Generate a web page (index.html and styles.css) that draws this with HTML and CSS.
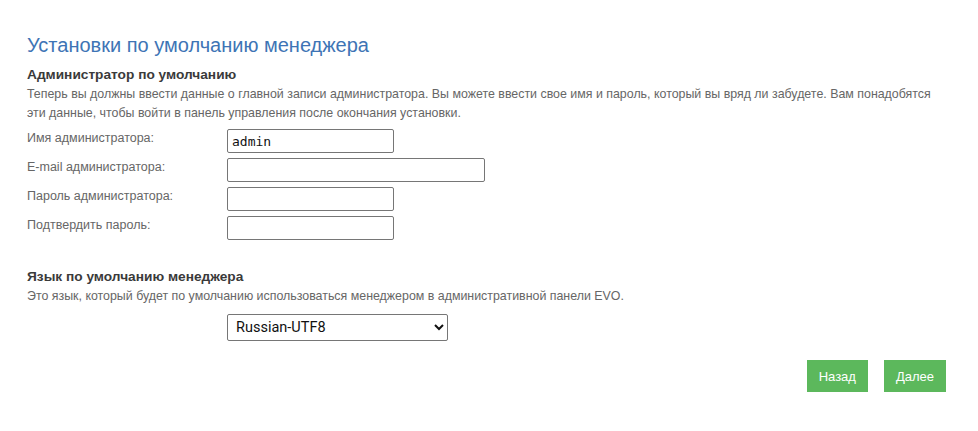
FILE: index.html
```html
<!DOCTYPE html>
<html>
<head>
  <meta charset="UTF-8">
  <link rel="stylesheet" href="styles.css">
</head>
<body>
  <div class="container">
    <h2>Установки по умолчанию менеджера</h2>

    <div class="section">
      <h3>Администратор по умолчанию</h3>
      <p class="helper-text">Теперь вы должны ввести данные о главной записи администратора. Вы можете ввести свое имя и пароль, который вы вряд ли забудете. Вам понадобятся эти данные, чтобы войти в панель управления после окончания установки.</p>

      <div class="form-row">
        <label for="cmsadmin">Имя администратора:</label>
        <input type="text" id="cmsadmin" value="admin">
      </div>
      <div class="form-row">
        <label for="cmsadminemail">E-mail администратора:</label>
        <input type="text" id="cmsadminemail" class="wide">
      </div>
      <div class="form-row">
        <label for="cmspassword">Пароль администратора:</label>
        <input type="password" id="cmspassword">
      </div>
      <div class="form-row">
        <label for="cmspasswordconfirm">Подтвердить пароль:</label>
        <input type="password" id="cmspasswordconfirm">
      </div>
    </div>

    <div class="section lang">
      <h3>Язык по умолчанию менеджера</h3>
      <p class="helper-text">Это язык, который будет по умолчанию использоваться менеджером в административной панели EVO.</p>
      <div class="form-row">
        <span class="spacer"></span>
        <select id="managerlanguage">
          <option>Russian-UTF8</option>
        </select>
      </div>
    </div>

    <div class="actions">
      <button class="btn">Назад</button>
      <button class="btn">Далее</button>
    </div>
  </div>
</body>
</html>
```

FILE: styles.css
```css
:root {
  --title-color: #3e74b5;
  --text-primary: #444;
  --text-secondary: #666;
  --border-color: #767676;
  --button-color: #5cb85c;
}

body {
  margin: 0;
  font-family: 'Liberation Sans', Arial, sans-serif;
  color: var(--text-primary);
  background: #fff;
}

.container {
  padding: 30px 32px 0 27px;
}

h2 {
  margin: 0 0 6px 0;
  font-size: 20px;
  font-weight: 400;
  color: var(--title-color);
  line-height: 30px;
}

h3 {
  margin: 0 0 1px 0;
  font-size: 13.7px;
  font-weight: 700;
  color: #3a3a3a;
  line-height: 18px;
}

.helper-text {
  margin: 0 0 6px 0;
  font-size: 12.4px;
  line-height: 19px;
  color: var(--text-secondary);
}

.form-row {
  display: flex;
  align-items: flex-start;
  margin-bottom: 5px;
}

label,
.spacer {
  width: 200px;
  flex: none;
  font-size: 12.5px;
  color: var(--text-secondary);
  line-height: 18px;
}

input[type="text"],
input[type="password"] {
  box-sizing: border-box;
  width: 167px;
  height: 24px;
  margin: 0;
  padding: 1px 4px;
  border: 1px solid var(--border-color);
  border-radius: 2px;
  font-family: 'DejaVu Sans Mono', monospace;
  font-size: 13px;
  color: #111;
}

input.wide {
  width: 258px;
}

.lang {
  margin-top: 28px;
}

.lang .helper-text {
  margin-bottom: 8px;
}

select {
  box-sizing: border-box;
  width: 221px;
  height: 27px;
  margin: 0;
  padding: 0 4px;
  border: 1px solid var(--border-color);
  border-radius: 2px;
  background: #fff;
  font-family: Roboto, sans-serif;
  font-size: 14.5px;
  color: #111;
}

.actions {
  display: flex;
  justify-content: flex-end;
  gap: 16px;
  margin-top: 19px;
}

.btn {
  height: 32px;
  padding: 0 12px;
  border: none;
  border-radius: 0;
  background: var(--button-color);
  color: #fff;
  font-family: 'Liberation Sans', Arial, sans-serif;
  font-size: 13px;
  cursor: pointer;
}
```
